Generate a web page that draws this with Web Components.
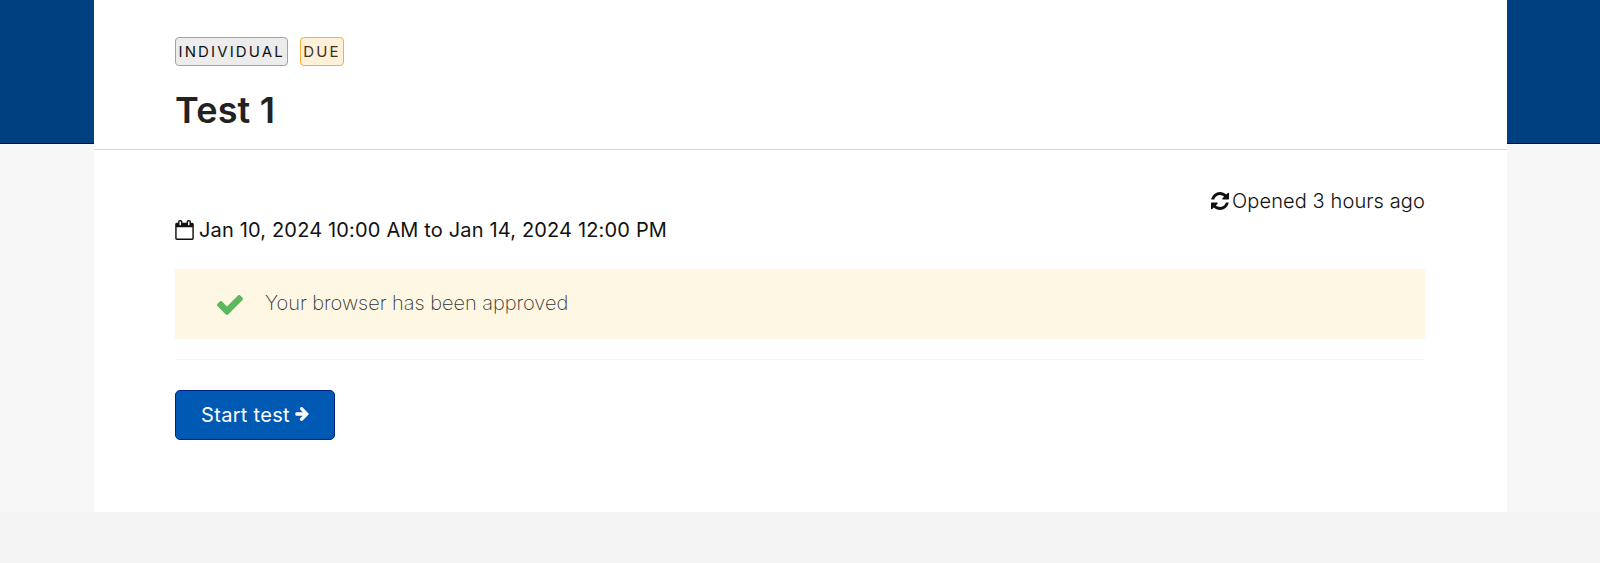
<!DOCTYPE html>
<html lang="en">
<head>
<meta charset="utf-8">
<title>Test 1</title>
<style>
	body {
		margin: 0;
		background: #f4f4f4;
		font-family: Inter, "Liberation Sans", sans-serif;
		color: #111;
	}
</style>
</head>
<body>
<test-page>
	<tag-label slot="tags">INDIVIDUAL</tag-label>
	<tag-label slot="tags" kind="due">DUE</tag-label>
	<span slot="title">Test 1</span>
	<status-line class="opened"><fa-icon name="refresh"></fa-icon><span>Opened 3 hours ago</span></status-line>
	<status-line class="dates"><fa-icon name="calendar"></fa-icon><span>Jan 10, 2024 10:00 AM to Jan 14, 2024 12:00 PM</span></status-line>
	<notice-box>Your browser has been approved</notice-box>
	<start-button>Start test</start-button>
</test-page>

<script>
	const ICONS = {
		calendar: ['64 0 1664 1792', 'M192 1664h1408v-1024h-1408v1024zm384-1216v-288q0-14-9-23t-23-9h-64q-14 0-23 9t-9 23v288q0 14 9 23t23 9h64q14 0 23-9t9-23zm768 0v-288q0-14-9-23t-23-9h-64q-14 0-23 9t-9 23v288q0 14 9 23t23 9h64q14 0 23-9t9-23zm384-64v1280q0 52-38 90t-90 38h-1408q-52 0-90-38t-38-90v-1280q0-52 38-90t90-38h128v-96q0-66 47-113t113-47h64q66 0 113 47t47 113v96h384v-96q0-66 47-113t113-47h64q66 0 113 47t47 113v96h128q52 0 90 38t38 90z'],
		refresh: ['128 128 1536 1536', 'M1639 1056q0 5-1 7-64 268-268 434.5t-478 166.5q-146 0-282.5-55t-243.5-157l-129 129q-19 19-45 19t-45-19-19-45v-448q0-26 19-45t45-19h448q26 0 45 19t19 45-19 45l-137 137q71 66 161 102t187 36q134 0 250-65t186-179q11-17 53-117 8-23 30-23h192q13 0 22.5 9.5t9.5 22.5zm25-800v448q0 26-19 45t-45 19h-448q-26 0-45-19t-19-45 19-45l138-138q-148-137-349-137-134 0-250 65t-186 179q-11 17-53 117-8 23-30 23h-199q-13 0-22.5-9.5t-9.5-22.5v-7q65-268 270-434.5t480-166.5q146 0 284 55.5t245 156.5l130-129q19-19 45-19t45 19 19 45z'],
		check: ['121 344 1550 1178', 'M1671 566q0 40-28 68l-724 724-136 136q-28 28-68 28t-68-28l-136-136-362-362q-28-28-28-68t28-68l136-136q28-28 68-28t68 28l294 295 656-657q28-28 68-28t68 28l136 136q28 28 28 68z'],
		arrow: ['128 183 1472 1556', 'M1600 960q0 54-37 91l-651 651q-39 37-91 37-51 0-90-37l-75-75q-38-38-38-91t38-91l293-293h-704q-52 0-84.5-37.5t-32.5-90.5v-128q0-53 32.5-90.5t84.5-37.5h704l-293-294q-38-36-38-90t38-90l75-75q38-38 90-38 53 0 91 38l651 651q37 35 37 90z']
	};

	class FaIcon extends HTMLElement {
		constructor() {
			super();
			this.attachShadow({ mode: 'open' });
		}

		connectedCallback() {
			const [box, path] = ICONS[this.getAttribute('name')];
			this.shadowRoot.innerHTML = `
				<style>
					:host { display: block; flex: none; }
					:host([name=calendar]) { width: 19px; height: 20px; margin-bottom: 1px; }
					:host([name=refresh]) { width: 18px; height: 18px; }
					:host([name=check]) { width: 26px; height: 20px; }
					:host([name=arrow]) { width: 14px; height: 14px; margin-bottom: 1px; }
					svg { display: block; width: 100%; height: 100%; }
				</style>
				<svg viewBox="${box}" fill="currentColor"><path d="${path}"/></svg>
			`;
		}
	}

	class TagLabel extends HTMLElement {
		constructor() {
			super();
			this.attachShadow({ mode: 'open' });
			this.shadowRoot.innerHTML = `
				<style>
					:host {
						box-sizing: border-box;
						display: block;
						height: 29px;
						padding: 0 2px 0 2.5px;
						border: 1px solid #a3a3a3;
						border-radius: 4px;
						background: #ececec;
						font-size: 15px;
						font-weight: 370;
						line-height: 28px;
						letter-spacing: 2.12px;
					}

					:host([kind=due]) {
						border-color: #f5ae3d;
						background: #fff0d9;
						color: #3c3020;
					}
				</style>
				<slot></slot>
			`;
		}
	}

	class StatusLine extends HTMLElement {
		constructor() {
			super();
			this.attachShadow({ mode: 'open' });
			this.shadowRoot.innerHTML = `
				<style>
					:host {
						display: flex;
						align-items: center;
						height: 28px;
						font-size: 20px;
						line-height: 28px;
					}

					:host(.opened) {
						justify-content: flex-end;
						gap: 3px;
						font-weight: 300;
						letter-spacing: 0.11px;
					}

					:host(.dates) {
						gap: 5px;
						margin-top: 1px;
						letter-spacing: 0.16px;
					}
				</style>
				<slot></slot>
			`;
		}
	}

	class NoticeBox extends HTMLElement {
		constructor() {
			super();
			this.attachShadow({ mode: 'open' });
			this.shadowRoot.innerHTML = `
				<style>
					:host {
						box-sizing: border-box;
						display: flex;
						align-items: center;
						gap: 22px;
						height: 70px;
						margin-top: 25px;
						padding: 0 42px;
						background: #fdf7e4;
						color: #333;
						font-size: 20px;
						font-weight: 200;
						letter-spacing: -0.03px;
					}

					fa-icon {
						color: #5cb85c;
						margin-top: 1px;
					}

					span { margin-top: -2px; }
				</style>
				<fa-icon name="check"></fa-icon>
				<span><slot></slot></span>
			`;
		}
	}

	class StartButton extends HTMLElement {
		constructor() {
			super();
			this.attachShadow({ mode: 'open' });
			this.shadowRoot.innerHTML = `
				<style>
					:host {
						display: block;
						margin-top: 20px;
						padding-top: 30px;
						border-top: 1px solid #f4f4f4;
					}

					button {
						box-sizing: border-box;
						display: flex;
						align-items: center;
						justify-content: center;
						gap: 5px;
						width: 160px;
						height: 50px;
						padding: 0 0 1px;
						border: 1px solid #00208a;
						border-radius: 5px;
						background: #0059b3;
						color: #fff;
						font: inherit;
						font-size: 20px;
						letter-spacing: 0.3px;
					}
				</style>
				<button><span><slot></slot></span><fa-icon name="arrow"></fa-icon></button>
			`;
		}
	}

	class TestPage extends HTMLElement {
		constructor() {
			super();
			this.attachShadow({ mode: 'open' });
			this.shadowRoot.innerHTML = `
				<style>
					:host {
						display: block;
						height: 512px;
						padding: 0 93px 0 94px;
						background: linear-gradient(#004080 143px, #00006b 143px 144px, #f7f7f7 144px);
					}

					main {
						box-sizing: border-box;
						height: 512px;
						background: #fff;
					}

					header {
						box-sizing: border-box;
						height: 150px;
						padding: 37px 81px 0;
						border-bottom: 1px solid #d6d6d6;
					}

					.tags {
						display: flex;
						gap: 12px;
					}

					h1 {
						margin: 22px 0 0;
						font-size: 36px;
						font-weight: 590;
						line-height: 44px;
						letter-spacing: 0.2px;
						color: #222;
					}

					section { padding: 37px 82px 0 81px; }
				</style>
				<main>
					<header>
						<div class="tags"><slot name="tags"></slot></div>
						<h1><slot name="title"></slot></h1>
					</header>
					<section><slot></slot></section>
				</main>
			`;
		}
	}

	customElements.define('fa-icon', FaIcon);
	customElements.define('tag-label', TagLabel);
	customElements.define('status-line', StatusLine);
	customElements.define('notice-box', NoticeBox);
	customElements.define('start-button', StartButton);
	customElements.define('test-page', TestPage);
</script>
</body>
</html>
